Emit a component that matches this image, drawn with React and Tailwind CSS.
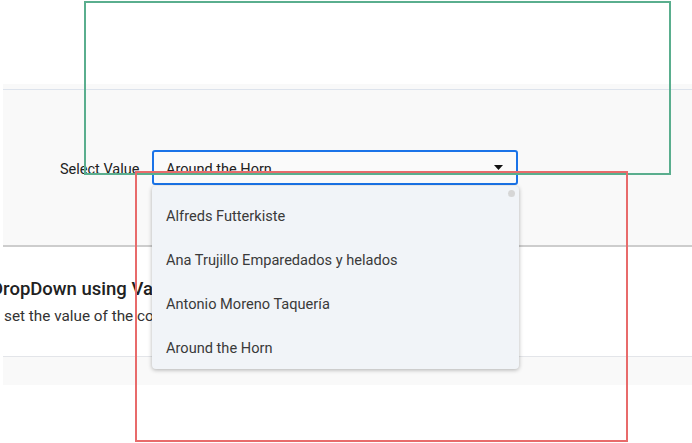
import React from "react";

const items = [
  "Alfreds Futterkiste",
  "Ana Trujillo Emparedados y helados",
  "Antonio Moreno Taquería",
  "Around the Horn",
];

export default function App() {
  return (
    <div
      className="relative w-[692px] h-[443px] overflow-hidden bg-white text-[#212121]"
      style={{ fontFamily: "Roboto, 'Noto Sans', sans-serif" }}
    >
      <div className="h-[84px]" />
      {/* top panel */}
      <div className="ml-[3px] bg-[#f9f9f9]">
        <div className="h-[6px] border-b border-[#dde3ec]" />
        <div className="flex items-center pt-[60px] pb-[60px] border-b-2 border-[#cdcdcd]">
          <div className="w-[149px] pl-[57px] pt-[4px] text-[14.5px] text-[#212121]">Select Value</div>
          <div className="relative">
            <div className="flex items-center justify-between w-[366px] h-[35px] border-2 border-[#1a73e8] rounded-[3px] bg-[#fafafa] pl-[12px] pr-[13px] pt-[4px] text-[14.5px] text-[#212121]">
              <span>Around the Horn</span>
              <svg width="9" height="5" viewBox="0 0 9 5" className="-mt-[4px]">
                <path d="M0 0 L9 0 L4.5 5 Z" fill="#111" />
              </svg>
            </div>
            {/* dropdown popup */}
            <div className="absolute left-0 top-[36px] z-10 w-[367px] h-[183px] overflow-hidden rounded-[4px] bg-[#f1f4f8] shadow-[0_1px_4px_rgba(0,0,0,0.3)]">
              <div className="absolute right-[4px] top-[4px] w-[7px] h-[7px] rounded-full bg-[#d6d6d6]" />
              <div className="pt-[9px]">
                {items.map((t) => (
                  <div key={t} className="h-[44px] flex items-center pl-[14px] text-[14.6px] text-[#3a3a3a]">
                    {t}
                  </div>
                ))}
              </div>
            </div>
          </div>
        </div>
      </div>
      {/* description section */}
      <div className="ml-[3px]">
        <div className="pt-[30px] pb-[30px] border-b border-[#e3e5e9]">
          <div className="-ml-[12px] text-[18.5px] font-medium leading-[24px] text-[#212121] whitespace-nowrap">
            DropDown using Value
          </div>
          <div className="ml-[1px] mt-[5px] text-[15.3px] leading-[20px] text-[#333] whitespace-nowrap">
            set the value of the component
          </div>
        </div>
        <div className="h-[28px] bg-[#f9f9f9]" />
      </div>

      {/* overlay rectangles */}
      <div className="absolute left-[84px] top-[1px] w-[587px] h-[174px] border-2 border-[#5aae8e] z-20 pointer-events-none" />
      <div className="absolute left-[135px] top-[171px] w-[493px] h-[271px] border-2 border-[#e86b6b] z-30 pointer-events-none" />
    </div>
  );
}
